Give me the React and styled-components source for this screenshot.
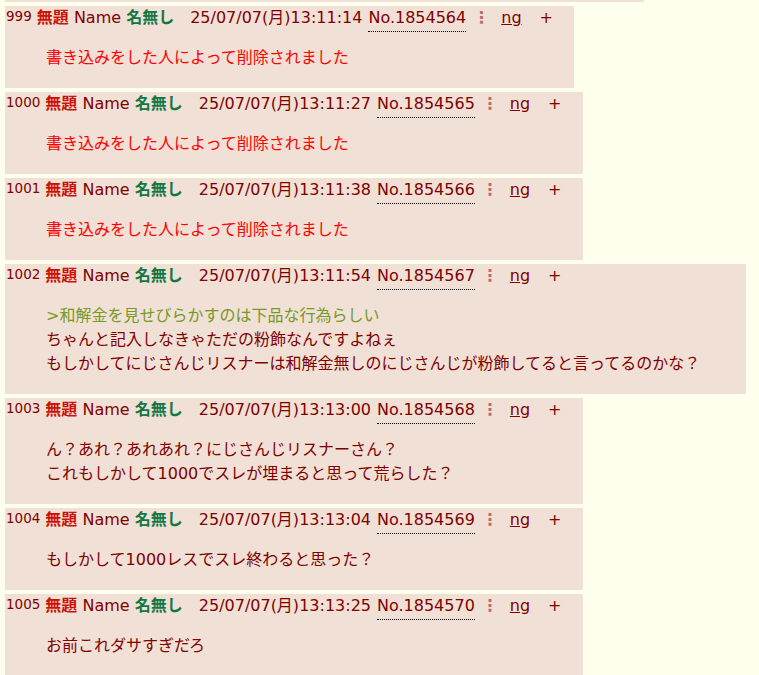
import React from 'react';
import styled, { createGlobalStyle } from 'styled-components';

const GlobalStyle = createGlobalStyle`
  html, body {
    margin: 0;
    padding: 0;
    overflow: hidden;
    background: #ffffee;
  }
  body {
    font-family: "DejaVu Sans", "Noto Sans CJK JP", sans-serif;
    font-size: 16px;
    color: #800000;
  }
`;

const Thread = styled.div`
  display: flex;
  flex-direction: column;
  align-items: flex-start;
  gap: 4px;
  padding-left: 5px;
`;

const PrevTail = styled.div`
  width: 639px;
  height: 2px;
  background: #f0e0d6;
`;

const Reply = styled.div`
  background: #f0e0d6;
  padding: 2px 6px 0 0;
`;

const Header = styled.div`
  height: 20px;
  line-height: 20px;
  white-space: nowrap;
  padding-left: 1px;
`;

const Num = styled.span`
  font-size: 13.5px;
  line-height: 14px;
  vertical-align: 2px;
  margin-right: 5px;
`;

const Subject = styled.b`
  color: #cc1105;
`;

const Name = styled.b`
  color: #117743;
`;

const Date = styled.span`
  margin-left: 16px;
`;

const PostNo = styled.span`
  margin-left: 6px;
  padding-bottom: 4px;
  border-bottom: 1px dotted #000;
`;

const Menu = styled.span`
  color: #b86a6a;
  font-weight: bold;
  margin: 0 12px 0 7px;
`;

const Ng = styled.span`
  text-decoration: underline;
`;

const Plus = styled.span`
  margin: 0 15px 0 18px;
`;

const Body = styled.blockquote`
  margin: 18px 40px 18px 41px;
  line-height: 24px;
  white-space: nowrap;
`;

const Line = styled.div`
  color: ${(p) => (p.$kind === 'quote' ? '#789922' : p.$kind === 'del' ? '#ff0000' : '#800000')};
`;

const DELETED = [{ kind: 'del', text: '書き込みをした人によって削除されました' }];

const posts = [
  { num: 999, time: '13:11:14', no: 1854564, lines: DELETED },
  { num: 1000, time: '13:11:27', no: 1854565, lines: DELETED },
  { num: 1001, time: '13:11:38', no: 1854566, lines: DELETED },
  {
    num: 1002,
    time: '13:11:54',
    no: 1854567,
    lines: [
      { kind: 'quote', text: '>和解金を見せびらかすのは下品な行為らしい' },
      { text: 'ちゃんと記入しなきゃただの粉飾なんですよねぇ' },
      { text: 'もしかしてにじさんじリスナーは和解金無しのにじさんじが粉飾してると言ってるのかな？' },
    ],
  },
  {
    num: 1003,
    time: '13:13:00',
    no: 1854568,
    lines: [
      { text: 'ん？あれ？あれあれ？にじさんじリスナーさん？' },
      { text: 'これもしかして1000でスレが埋まると思って荒らした？' },
    ],
  },
  { num: 1004, time: '13:13:04', no: 1854569, lines: [{ text: 'もしかして1000レスでスレ終わると思った？' }] },
  { num: 1005, time: '13:13:25', no: 1854570, lines: [{ text: 'お前これダサすぎだろ' }] },
];

function Post({ post }) {
  return (
    <Reply>
      <Header>
        <Num>{post.num}</Num>
        <Subject>無題</Subject> Name <Name>名無し</Name>
        <Date>25/07/07(月){post.time}</Date>
        <PostNo>No.{post.no}</PostNo>
        <Menu>⋮</Menu>
        <Ng>ng</Ng>
        <Plus>+</Plus>
      </Header>
      <Body>
        {post.lines.map((l, i) => (
          <Line key={i} $kind={l.kind}>{l.text}</Line>
        ))}
      </Body>
    </Reply>
  );
}

export default function App() {
  return (
    <>
      <GlobalStyle />
      <Thread>
        <PrevTail />
        {posts.map((p) => (
          <Post key={p.no} post={p} />
        ))}
      </Thread>
    </>
  );
}
